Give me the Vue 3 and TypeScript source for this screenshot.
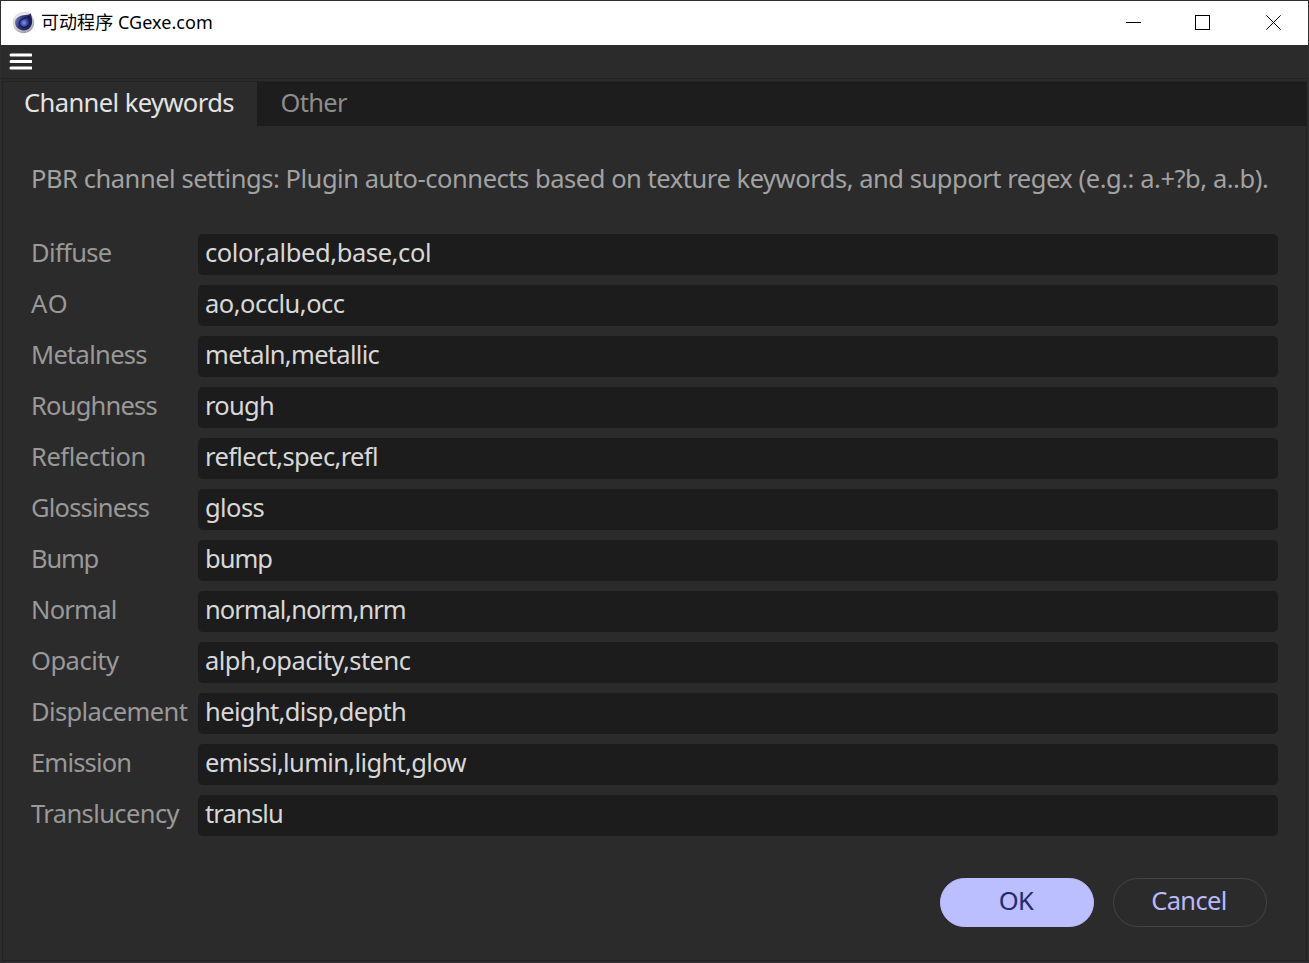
<script setup lang="ts">
import { ref } from 'vue'

interface Channel {
  id: string
  label: string
  value: string
  labelTrack: number
  valueTrack: number
}

interface Tab {
  name: string
  track: number
}

const activeTab = ref(0)
const tabs: Tab[] = [
  { name: 'Channel keywords', track: -0.58 },
  { name: 'Other', track: -0.7 },
]

const channels = ref<Channel[]>([
  { id: 'diffuse', label: 'Diffuse', value: 'color,albed,base,col', labelTrack: -0.65, valueTrack: -0.4 },
  { id: 'ao', label: 'AO', value: 'ao,occlu,occ', labelTrack: 1, valueTrack: -0.5 },
  { id: 'metalness', label: 'Metalness', value: 'metaln,metallic', labelTrack: -0.7, valueTrack: -0.7 },
  { id: 'roughness', label: 'Roughness', value: 'rough', labelTrack: -0.8, valueTrack: -0.75 },
  { id: 'reflection', label: 'Reflection', value: 'reflect,spec,refl', labelTrack: -0.45, valueTrack: -0.62 },
  { id: 'glossiness', label: 'Glossiness', value: 'gloss', labelTrack: -0.8, valueTrack: -0.6 },
  { id: 'bump', label: 'Bump', value: 'bump', labelTrack: -1.2, valueTrack: -1 },
  { id: 'normal', label: 'Normal', value: 'normal,norm,nrm', labelTrack: -0.75, valueTrack: -1.02 },
  { id: 'opacity', label: 'Opacity', value: 'alph,opacity,stenc', labelTrack: -0.5, valueTrack: -0.55 },
  { id: 'displacement', label: 'Displacement', value: 'height,disp,depth', labelTrack: -0.63, valueTrack: -0.63 },
  { id: 'emission', label: 'Emission', value: 'emissi,lumin,light,glow', labelTrack: -0.82, valueTrack: -0.65 },
  { id: 'translucency', label: 'Translucency', value: 'translu', labelTrack: -0.6, valueTrack: -0.85 },
])

const tracking = (px: number) => ({ letterSpacing: `${px}px` })
</script>

<template>
  <div class="window">
    <header class="titlebar">
      <svg class="logo" viewBox="0 0 24 24" aria-hidden="true">
        <defs>
          <radialGradient id="shell" cx="40%" cy="30%" r="75%">
            <stop offset="0" stop-color="#f4f4f4" />
            <stop offset="0.65" stop-color="#d2d2d4" />
            <stop offset="1" stop-color="#949498" />
          </radialGradient>
          <linearGradient id="drop" x1="0" y1="0.300" x2="1" y2="0.700">
            <stop offset="0" stop-color="#7a82bd" />
            <stop offset="0.350" stop-color="#30387f" />
            <stop offset="1" stop-color="#1a1c58" />
          </linearGradient>
          <radialGradient id="lens" cx="45%" cy="60%" r="60%">
            <stop offset="0" stop-color="#8798df" />
            <stop offset="0.5" stop-color="#3d4bab" />
            <stop offset="1" stop-color="#181c60" />
          </radialGradient>
        </defs>
        <circle cx="12" cy="12" r="11.200" fill="url(#shell)" />
        <path d="M19.600 2.400C19.800 4.300 21.600 7.600 21 12C20.300 17 16.600 20.600 12 20.300C6.600 20 3 16.300 3.200 11.800C3.400 7.800 7.200 5 12 4.500C15.400 4.100 18 4 19.600 2.400Z" fill="url(#drop)" />
        <path d="M17.800 5.200C17.600 7 19 9.200 18.400 12.200C17.600 15.800 14.400 17.600 11.300 16.900C8.300 16.200 7 13.500 8 11C9.300 8 14.800 7.800 17.800 5.200Z" fill="url(#lens)" stroke="#0f1140" stroke-width="1" />
      </svg>
      <span class="title">可动程序 CGexe.com</span>
      <div class="controls">
        <svg class="control" viewBox="0 0 15 15" aria-label="Minimize"><path d="M0 7.500H15" /></svg>
        <svg class="control" viewBox="0 0 15 15" aria-label="Maximize"><rect x="0.500" y="0.500" width="14" height="14" /></svg>
        <svg class="control close" viewBox="0 0 15 15" aria-label="Close"><path d="M0.300 0.300L14.700 14.700M14.700 0.300L0.300 14.700" /></svg>
      </div>
    </header>

    <div class="menubar">
      <svg class="burger" viewBox="0 0 23 17" aria-label="Menu">
        <path d="M2 2H22M2 8.500H22M2 15H22" />
      </svg>
    </div>

    <nav class="tabs">
      <div
        v-for="(tab, i) in tabs"
        :key="tab.name"
        class="tab"
        :class="{ active: i === activeTab }"
        :style="tracking(tab.track)"
        @click="activeTab = i"
      >{{ tab.name }}</div>
    </nav>

    <main class="panel">
      <p class="hint">PBR channel settings: Plugin auto-connects based on texture keywords, and support regex (e.g.: a.+?b, a..b).</p>
      <div class="form">
        <div v-for="c in channels" :key="c.id" class="row">
          <label class="label" :for="c.id" :style="tracking(c.labelTrack)">{{ c.label }}</label>
          <input :id="c.id" v-model="c.value" class="field" :style="tracking(c.valueTrack)" type="text" spellcheck="false" />
        </div>
      </div>
      <footer class="actions">
        <button class="button primary" type="button">OK</button>
        <button class="button" type="button">Cancel</button>
      </footer>
    </main>
  </div>
</template>

<style>
body {
  margin: 0;
  background: #2b2b2b;
}
</style>

<style scoped>
.window {
  box-sizing: border-box;
  width: 1309px;
  height: 963px;
  display: flex;
  flex-direction: column;
  background: #2b2b2b;
  border: 1px solid #2f2d2f;
  overflow: hidden;
  font-family: "Noto Sans", "Noto Sans CJK SC", sans-serif;
  font-size: 25.5px;
}
.titlebar {
  box-sizing: border-box;
  height: 44px;
  flex: none;
  display: flex;
  align-items: center;
  padding-bottom: 2px;
  background: #fff;
}
.logo {
  width: 23px;
  height: 23px;
  margin-left: 11px;
}
.title {
  margin-left: 6px;
  color: #000;
  font-size: 18px;
  line-height: 24px;
  letter-spacing: 0.05px;
  white-space: nowrap;
}
.controls {
  display: flex;
  gap: 54px;
  margin-left: auto;
  padding-right: 27px;
}
.control {
  width: 15px;
  height: 15px;
  fill: none;
  stroke: #000;
  stroke-width: 1;
}
.close {
  margin-left: 2px;
}
.menubar {
  box-sizing: border-box;
  height: 34px;
  flex: none;
  padding: 8px 0 0 8px;
  border-bottom: 1px solid #232323;
}
.burger {
  display: block;
  width: 23px;
  height: 17px;
  fill: none;
  stroke: #fff;
  stroke-width: 3;
  stroke-linecap: round;
}
.tabs {
  height: 44px;
  flex: none;
  display: flex;
  margin: 2px 1px 0 1px;
  border-top: 1px solid #222;
  border-left: 1px solid #212121;
  background: #1d1d1d;
}
.tab {
  padding: 0 23px 0 23.5px;
  line-height: 40px;
  color: #8c8c8c;
  white-space: nowrap;
}
.tab.active {
  box-sizing: border-box;
  width: 254px;
  padding-left: 21px;
  padding-right: 0;
  background: #2b2b2b;
  color: #e4e4e4;
}
.panel {
  flex: 1;
  display: flex;
  flex-direction: column;
  margin: 0 1px 1px;
  border: 1px solid #212121;
  border-top: 0;
  padding: 32px 28px 0;
}
.hint {
  margin: 0;
  line-height: 40px;
  letter-spacing: -0.46px;
  color: #a2a2a2;
  white-space: nowrap;
}
.form {
  display: flex;
  flex-direction: column;
  gap: 10px;
  margin-top: 36px;
}
.row {
  display: grid;
  grid-template-columns: 167px 1080px;
  height: 41px;
}
.label {
  line-height: 36px;
  color: #999;
}
.field {
  box-sizing: border-box;
  height: 41px;
  min-width: 0;
  border: 0;
  border-radius: 5px;
  outline: 0;
  padding: 0 7px 5px;
  background: #1c1c1c;
  color: #d8d8d8;
  font: inherit;
}
.actions {
  display: flex;
  gap: 19px;
  justify-content: flex-end;
  margin-top: 42px;
  padding-right: 11px;
}
.button {
  box-sizing: border-box;
  width: 154px;
  height: 49px;
  border: 1px solid #444;
  border-radius: 25px;
  padding: 0 2px 5px 0;
  background: transparent;
  color: #b9b9fc;
  font: inherit;
  letter-spacing: -0.65px;
}
.button.primary {
  border-color: #bbbeff;
  background: #bbbeff;
  color: #222a70;
}
</style>
